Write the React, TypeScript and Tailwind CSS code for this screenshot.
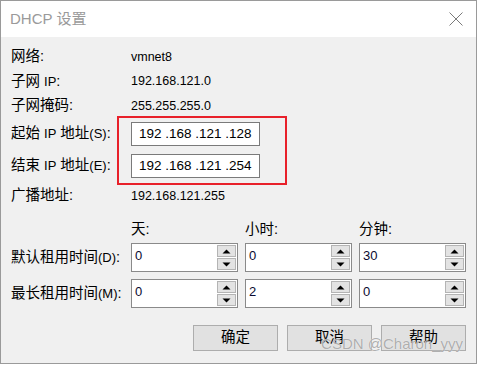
import React from "react";

const FONT = { fontFamily: '"Liberation Sans", "Noto Sans CJK SC", sans-serif' };

function InfoRow({ label, value, h }: { label: React.ReactNode; value: string; h: string }) {
  return (
    <div className={`flex items-center ${h}`}>
      <div className="w-[120px] text-[14.5px] text-black">{label}</div>
      <div className="text-[12.5px] text-black">{value}</div>
    </div>
  );
}

function IpRow({ label, value }: { label: React.ReactNode; value: string }) {
  return (
    <div className="flex items-center h-[32px]">
      <div className="w-[120px] text-[14.5px] text-black">{label}</div>
      <div className="w-[129px] h-[24px] border border-[#7a7a7a] bg-white flex items-center pl-[7px] text-[13.5px] text-black whitespace-pre">
        {value}
      </div>
    </div>
  );
}

function Arrow({ up }: { up?: boolean }) {
  return (
    <svg width="9" height="5" viewBox="0 0 9 5">
      {up ? <path d="M0.5 4.5 L4.5 0.5 L8.5 4.5 Z" fill="#000" /> : <path d="M0.5 0.5 L4.5 4.5 L8.5 0.5 Z" fill="#000" />}
    </svg>
  );
}

function Spin({ value }: { value: string }) {
  return (
    <div className="flex w-[107px] h-[29px] border border-[#8a8a8a] bg-white">
      <div className="flex-1 pl-[3px] pt-[3px] text-[13px] text-[#0a0a30] leading-[18px]">{value}</div>
      <div className="w-[21px] flex flex-col gap-[1px] p-[1px]">
        <div className="flex-1 bg-[#e3e3e3] border border-[#b4b4b4] flex items-center justify-center">
          <Arrow up />
        </div>
        <div className="flex-1 bg-[#e3e3e3] border border-[#b4b4b4] flex items-center justify-center">
          <Arrow />
        </div>
      </div>
    </div>
  );
}

function Btn({ children }: { children: React.ReactNode }) {
  return (
    <button className="w-[85px] h-[26px] bg-[#e1e1e1] border border-[#adadad] text-[14.5px] text-black flex items-center justify-center">
      {children}
    </button>
  );
}

export default function App() {
  return (
    <div className="w-[478px] h-[365px] bg-white" style={FONT}>
      <div className="relative w-[477px] h-[364px] border border-[#9a9a9a] bg-[#f0f0f0] flex flex-col">
        {/* Title bar */}
        <div className="h-[36px] bg-white flex items-center justify-between pl-[9px] pr-[13px] shrink-0">
          <span className="text-[15px] text-[#9a9a9a]">DHCP 设置</span>
          <svg width="14" height="14" viewBox="0 0 14 14">
            <path d="M0.5 0.5 L13.5 13.5 M13.5 0.5 L0.5 13.5" stroke="#7a7a7a" strokeWidth="1" />
          </svg>
        </div>

        {/* Body */}
        <div className="flex flex-col pl-[10px] pr-[10px] pt-[8px]">
          <InfoRow h="h-[24px]" label="网络:" value="vmnet8" />
          <InfoRow h="h-[25px]" label={<>子网 <span className="text-[13px]">IP</span>:</>} value="192.168.121.0" />
          <InfoRow h="h-[24px]" label="子网掩码:" value="255.255.255.0" />

          <div className="relative">
            <IpRow label={<>起始 <span className="text-[13px]">IP</span> 地址<span className="text-[13px]">(S)</span>:</>} value="192 .168 .121 .128" />
            <IpRow label={<>结束 <span className="text-[13px]">IP</span> 地址<span className="text-[13px]">(E)</span>:</>} value="192 .168 .121 .254" />
            <div className="absolute left-[106px] top-[-2px] w-[170px] h-[69px] border-2 border-[#e8202a]" />
          </div>

          <InfoRow h="h-[28px]" label="广播地址:" value="192.168.121.255" />

          {/* Lease time */}
          <div className="flex items-center h-[24px] mt-[8px] text-[14.5px] text-black">
            <div className="w-[120px]" />
            <div className="w-[114px]">天:</div>
            <div className="w-[114px]">小时:</div>
            <div>分钟:</div>
          </div>
          <div className="flex items-center h-[29px] mt-[1px]">
            <div className="w-[120px] text-[14.5px] text-black">默认租用时间<span className="text-[13px]">(D)</span>:</div>
            <div className="flex gap-[7px]">
              <Spin value="0" />
              <Spin value="0" />
              <Spin value="30" />
            </div>
          </div>
          <div className="flex items-center h-[29px] mt-[7px]">
            <div className="w-[120px] text-[14.5px] text-black">最长租用时间<span className="text-[13px]">(M)</span>:</div>
            <div className="flex gap-[7px]">
              <Spin value="0" />
              <Spin value="2" />
              <Spin value="0" />
            </div>
          </div>

          <div className="flex justify-end gap-[9px] mt-[17px]">
            <Btn>确定</Btn>
            <Btn>取消</Btn>
            <Btn>帮助</Btn>
          </div>
        </div>

        <div className="absolute right-[13px] bottom-[8px] text-[15px] text-[#9a9a9a]/80 pointer-events-none"
          style={{ textShadow: "0 0 1px #fff" }}>
          CSDN @Charon_yyy
        </div>
      </div>
    </div>
  );
}
